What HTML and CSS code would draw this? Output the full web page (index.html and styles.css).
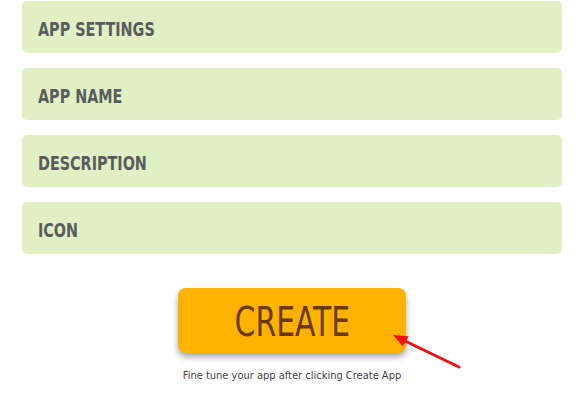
FILE: index.html
```html
<!DOCTYPE html>
<html lang="en">
<head>
    <meta charset="UTF-8">
    <title>Create App</title>
    <link rel="stylesheet" href="styles.css">
</head>
<body>
    <div class="fields">
        <div class="field"><span>APP SETTINGS</span></div>
        <div class="field"><span>APP NAME</span></div>
        <div class="field"><span>DESCRIPTION</span></div>
        <div class="field"><span>ICON</span></div>
    </div>

    <div class="create">
        <button class="create-btn"><span>CREATE</span></button>
        <p class="hint">Fine tune your app after clicking Create App</p>
        <!-- red pointer arrow drawn over the page -->
        <svg class="pointer" width="80" height="45" viewBox="0 0 80 45">
            <line x1="71" y1="39" x2="16" y2="12.5" stroke="#ee1111" stroke-width="3" stroke-linecap="round"/>
            <polygon points="5,7 20.5,8.2 15,18.2" fill="#ee1111"/>
        </svg>
    </div>
</body>
</html>
```

FILE: styles.css
```css
body {
    margin: 0;
    padding: 1px 20px 0 22px;
    background-color: #fff;
    font-family: "DejaVu Sans Condensed", "DejaVu Sans", sans-serif;
}

.fields {
    display: flex;
    flex-direction: column;
    gap: 15px;
}

.field {
    height: 52px;
    box-sizing: border-box;
    display: flex;
    align-items: center;
    padding: 4px 0 0 16px;
    background-color: #e0efc4;
    border-radius: 5px;
    color: #5a5d5d;
    font-size: 19px;
    font-weight: bold;
}

/* the original font is narrower than anything installed */
.field span {
    display: inline-block;
    transform: scaleX(0.84);
    transform-origin: left center;
}

.create {
    position: relative;
    display: flex;
    flex-direction: column;
    align-items: center;
    margin-top: 34px;
}

.create-btn {
    width: 228px;
    height: 65px;
    background-color: #ffb300;
    color: #6b3800;
    border: none;
    border-radius: 8px;
    box-shadow: 0 4px 6px rgba(0, 0, 0, 0.35);
    font-family: "DejaVu Sans Condensed", "DejaVu Sans", sans-serif;
    font-size: 41px;
    padding: 3px 0 0 0;
}

.create-btn span {
    display: inline-block;
    transform: scaleX(0.81);
}

.hint {
    margin: 16px 0 0 0;
    font-family: "DejaVu Sans Condensed", "DejaVu Sans", sans-serif;
    font-size: 11px;
    color: #444;
}

.pointer {
    position: absolute;
    left: 366px;
    top: 40px;
}
```
